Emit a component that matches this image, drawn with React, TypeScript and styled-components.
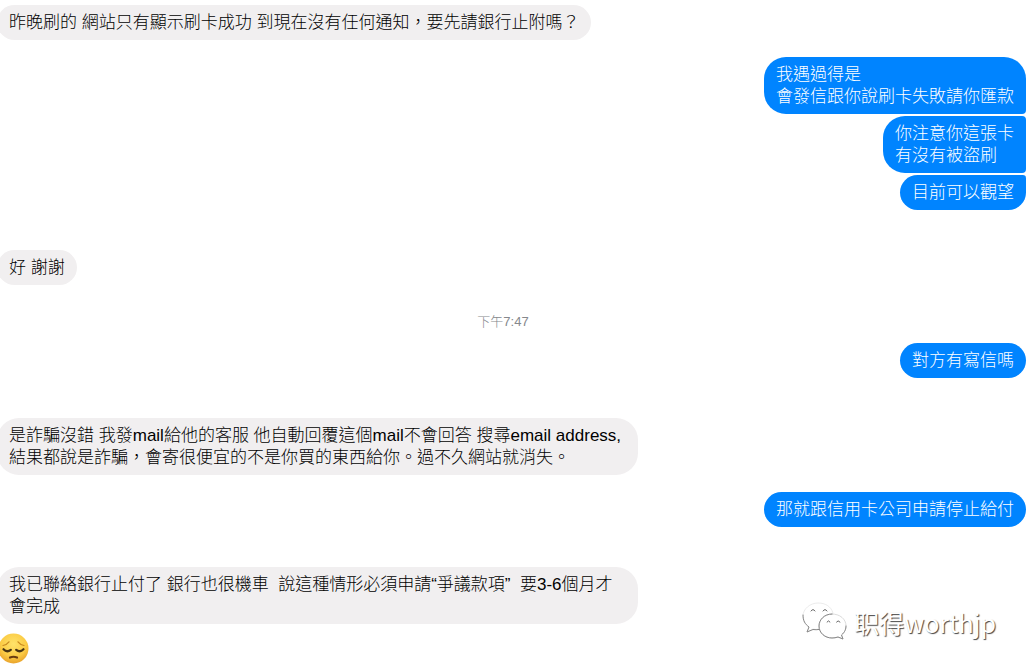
import React from "react";
import styled, { createGlobalStyle, css } from "styled-components";

const GlobalStyle = createGlobalStyle`
  * { box-sizing: border-box; }
  body {
    margin: 0;
    background: #ffffff;
    overflow-x: hidden;
    font-family: "Liberation Sans", "Noto Sans CJK TC", sans-serif;
  }
`;

const Conversation = styled.main`
  position: relative;
  display: flex;
  flex-direction: column;
  gap: 17px;
  padding: 5px 4px 8px 0;
  overflow: hidden;
`;

const Group = styled.section<{ $mine?: boolean; $spaced?: boolean }>`
  display: flex;
  flex-direction: column;
  gap: 2px;
  align-items: ${(p) => (p.$mine ? "flex-end" : "flex-start")};
  ${(p) =>
    p.$spaced &&
    css`
      margin-top: 23px;
    `}
`;

type Joint = "first" | "middle" | "last" | "single";

const corners: Record<Joint, string> = {
  single: "22px",
  first: "22px 22px 4px 22px",
  middle: "22px 4px 4px 22px",
  last: "22px 4px 22px 22px",
};

const Bubble = styled.p<{ $mine?: boolean; $joint?: Joint }>`
  margin: 0;
  padding: 7px 12px 6px;
  max-width: 641px;
  font-size: 17px;
  font-weight: 300;
  line-height: 22px;
  white-space: pre-wrap;
  border-radius: ${(p) => corners[p.$joint ?? "single"]};
  ${(p) =>
    p.$mine
      ? css`
          background: #0084ff;
          color: #ffffff;
        `
      : css`
          margin-left: -3px;
          background: #f1eff0;
          color: #000000;
        `}
`;

const Time = styled.time`
  align-self: center;
  padding-right: 20px;
  margin: 11px 0 -4px;
  font-size: 13px;
  font-weight: 300;
  line-height: 17px;
  color: #85888c;
`;

const Emoji = styled.svg`
  display: block;
  width: 31px;
  height: 31px;
  margin: -8px 0 0 -2px;
`;

const Watermark = styled.div`
  position: absolute;
  right: 34px;
  bottom: 29px;
  display: flex;
  align-items: center;
  gap: 6px;
  font-family: "Noto Sans CJK SC", sans-serif;
  font-size: 25px;
  line-height: 38px;
  color: #ffffff;
  text-shadow: 1px 1px 1px #444444;
`;

const Logo = styled.svg`
  width: 46px;
  height: 42px;
`;

const Pensive = () => (
  <Emoji viewBox="0 0 31 31" role="img" aria-label="沉思">
    <defs>
      <radialGradient id="face" cx="50%" cy="35%" r="65%">
        <stop offset="0" stopColor="#ffe36a" />
        <stop offset="0.65" stopColor="#fbcb45" />
        <stop offset="1" stopColor="#e9a32c" />
      </radialGradient>
    </defs>
    <circle cx="15.5" cy="15.5" r="15" fill="url(#face)" />
    <g fill="none" strokeLinecap="round">
      <path d="M5 12.5Q8.500 12 11 8.800M26 12.500Q22.500 12 20 8.800" stroke="#c98a20" strokeWidth="1.200" />
      <path d="M5.500 16.200Q9 20 12.800 16.800M18.200 16.800Q22 20 25.500 16.200" stroke="#473414" strokeWidth="2.200" />
      <path d="M12 24.500Q15.500 23 19 24.500" stroke="#6a3c10" strokeWidth="2.200" />
    </g>
  </Emoji>
);

const ChatLogo = () => (
  <Logo viewBox="0 0 46 42" fill="none" strokeLinecap="round" strokeLinejoin="round" aria-hidden="true">
    <path
      d="M31 12C29 5 23 2 16 2C8 2 1 8 1 15C1 20 3 23 7 26L5 31L11 28Q14 29 17 28"
      fill="#ffffff"
      stroke="#dddddd"
      strokeWidth="0.600"
    />
    <path d="M1 14C1 20 3 23 7 26L5 31L11 28.500Q14 29 17 28.500" stroke="#888888" />
    <path
      d="M30 13C22 13 17 19 17 25C17 32 23 37 30 37Q33 37 36 36L41 38L39.500 34C43 31 44 28 44 25C44 18 38 13 30 13Z"
      fill="#ffffff"
      stroke="#cccccc"
      strokeWidth="0.700"
    />
    <path d="M30 13C22 13 17 19 17 25C17 32 23 37 30 37Q33 37 36 36L41 38L39.500 34C43 31 44 28 44 25" stroke="#888888" />
    <path d="M9 10Q11 7 13 10M21 10Q23 7 25 10M25 21Q26.500 18.500 28 21M34.500 21Q36 18.500 38 21" stroke="#666666" />
  </Logo>
);

export default function App() {
  return (
    <>
      <GlobalStyle />
      <Conversation>
        <Group>
          <Bubble>昨晚刷的 網站只有顯示刷卡成功 到現在沒有任何通知，要先請銀行止附嗎？</Bubble>
        </Group>
        <Group $mine>
          <Bubble $mine $joint="first">{"我遇過得是\n會發信跟你說刷卡失敗請你匯款"}</Bubble>
          <Bubble $mine $joint="middle">{"你注意你這張卡\n有沒有被盜刷"}</Bubble>
          <Bubble $mine $joint="last">目前可以觀望</Bubble>
        </Group>
        <Group $spaced>
          <Bubble>好 謝謝</Bubble>
        </Group>
        <Time>下午7:47</Time>
        <Group $mine>
          <Bubble $mine>對方有寫信嗎</Bubble>
        </Group>
        <Group $spaced>
          <Bubble>
            是詐騙沒錯 我發mail給他的客服 他自動回覆這個mail不會回答 搜尋email address,
            結果都說是詐騙，會寄很便宜的不是你買的東西給你。過不久網站就消失。
          </Bubble>
        </Group>
        <Group $mine>
          <Bubble $mine>那就跟信用卡公司申請停止給付</Bubble>
        </Group>
        <Group $spaced>
          <Bubble>{"我已聯絡銀行止付了 銀行也很機車  說這種情形必須申請“爭議款項”  要3-6個月才會完成"}</Bubble>
        </Group>
        <Pensive />
        <Watermark>
          <ChatLogo />
          <span>职得worthjp</span>
        </Watermark>
      </Conversation>
    </>
  );
}
